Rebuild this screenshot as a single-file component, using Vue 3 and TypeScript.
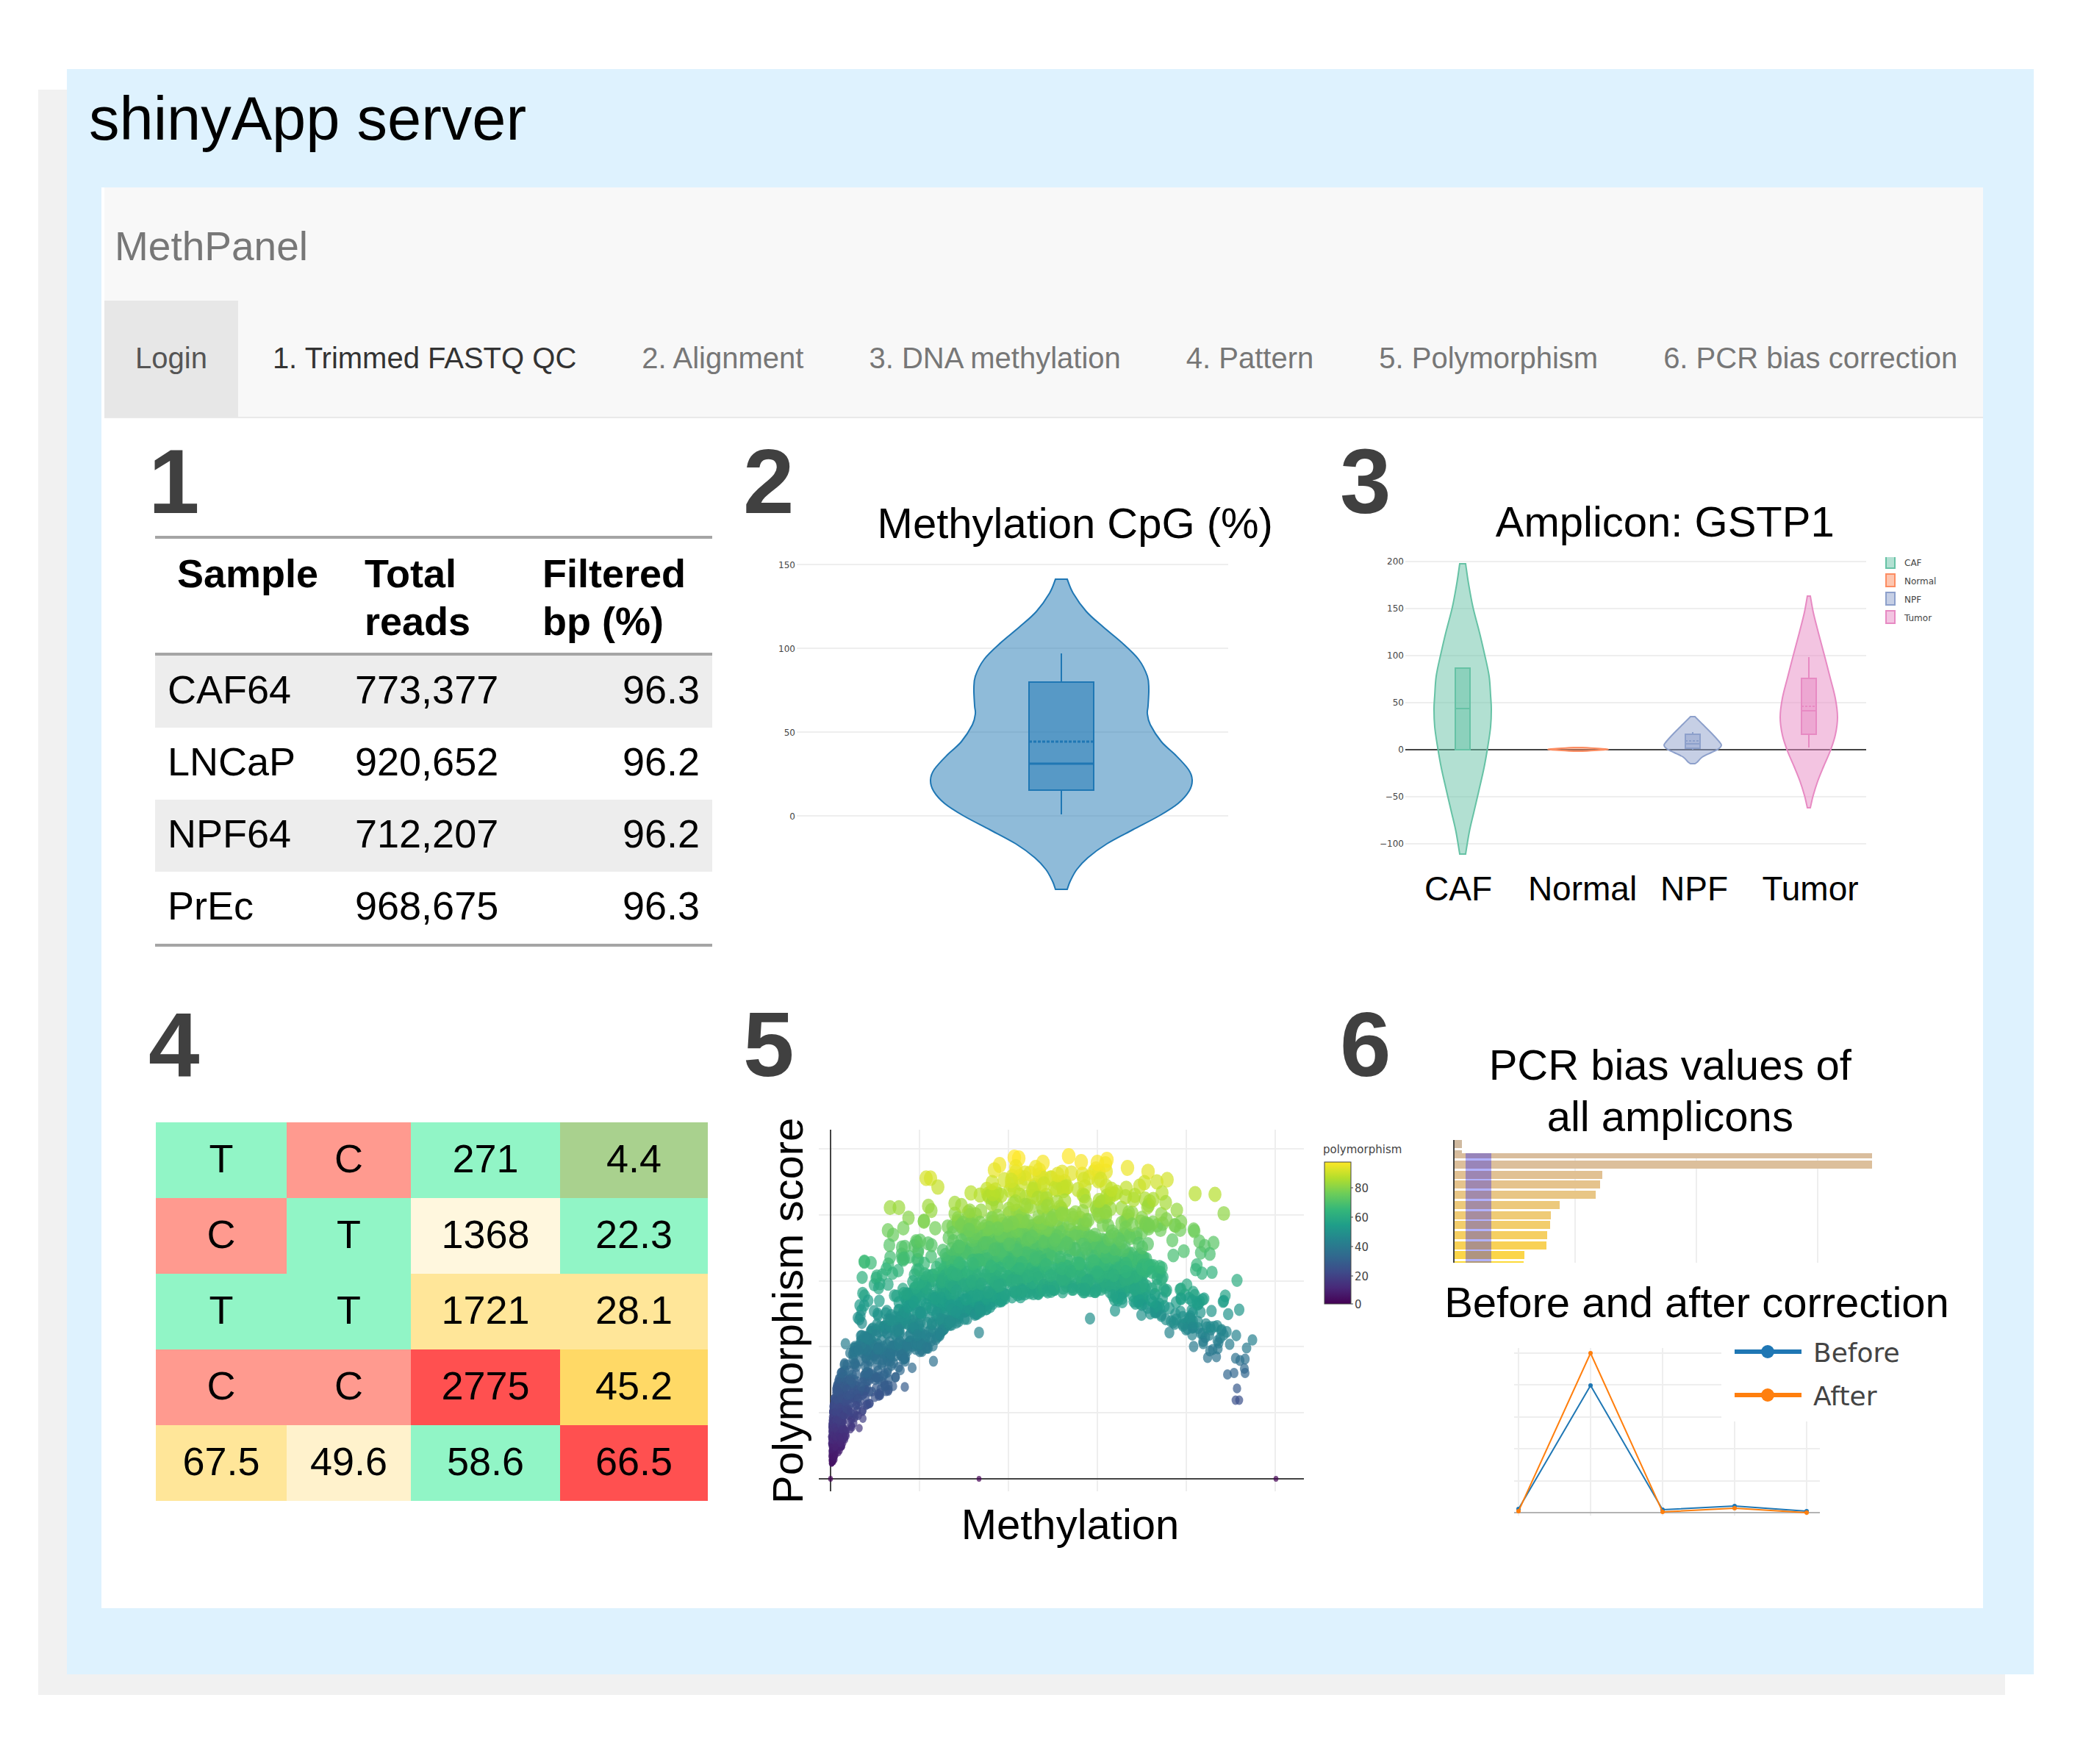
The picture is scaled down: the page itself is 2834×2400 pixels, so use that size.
<script setup lang="ts">
type Point = [number, number]

interface Violin {
  name: string
  color: string
  cx: number
  /** Pairs of half-width and vertical position, from top to bottom. */
  profile: Point[]
  box?: { half: number; top: number; bottom: number; median: number; mean?: number; low?: number; high?: number }
}

const tabs = [
  { label: 'Login', state: 'active' },
  { label: '1. Trimmed FASTQ QC', state: 'hover' },
  { label: '2. Alignment', state: '' },
  { label: '3. DNA methylation', state: '' },
  { label: '4. Pattern', state: '' },
  { label: '5. Polymorphism', state: '' },
  { label: '6. PCR bias correction', state: '' },
]

const samples = [
  { name: 'CAF64', reads: '773,377', filtered: '96.3' },
  { name: 'LNCaP', reads: '920,652', filtered: '96.2' },
  { name: 'NPF64', reads: '712,207', filtered: '96.2' },
  { name: 'PrEc', reads: '968,675', filtered: '96.3' },
]

const pattern: { text: string; tone: string }[][] = [
  [{ text: 'T', tone: 'mint' }, { text: 'C', tone: 'coral' }, { text: '271', tone: 'mint' }, { text: '4.4', tone: 'olive' }],
  [{ text: 'C', tone: 'coral' }, { text: 'T', tone: 'mint' }, { text: '1368', tone: 'ivory' }, { text: '22.3', tone: 'mint' }],
  [{ text: 'T', tone: 'mint' }, { text: 'T', tone: 'mint' }, { text: '1721', tone: 'sand' }, { text: '28.1', tone: 'sand' }],
  [{ text: 'C', tone: 'coral' }, { text: 'C', tone: 'coral' }, { text: '2775', tone: 'red' }, { text: '45.2', tone: 'gold' }],
  [{ text: '67.5', tone: 'sand' }, { text: '49.6', tone: 'cream' }, { text: '58.6', tone: 'mint' }, { text: '66.5', tone: 'red' }],
]

/** Closed outline mirrored around cx, smoothed with Catmull-Rom segments. */
function outline(v: Violin): string {
  const side = (sign: number): Point[] => v.profile.map(([w, y]) => [v.cx + sign * w, y])
  const curve = (p: Point[]): string => {
    let d = ''
    for (let i = 0; i < p.length - 1; i++) {
      const a = p[Math.max(i - 1, 0)]
      const b = p[i]
      const c = p[i + 1]
      const e = p[Math.min(i + 2, p.length - 1)]
      const n = [b[0] + (c[0] - a[0]) / 6, b[1] + (c[1] - a[1]) / 6, c[0] - (e[0] - b[0]) / 6, c[1] - (e[1] - b[1]) / 6, c[0], c[1]]
      d += 'C' + n.map((k) => k.toFixed(1)).join(' ')
    }
    return d
  }
  const right = side(1)
  const left = side(-1).reverse()
  return `M${right[0].join(' ')}${curve(right)}L${left[0].join(' ')}${curve(left)}Z`
}

const cpg: Violin = {
  name: 'CpG',
  color: '#1f77b4',
  cx: 454,
  profile: [
    [8, 41], [16, 60], [34, 85], [57, 106], [82, 127], [105, 150], [117, 173], [119, 190], [118, 213], [117, 224], [121, 239],
    [136, 262], [156, 281], [173, 300], [178, 314], [174, 329], [159, 346], [133, 363], [97, 382], [62, 401], [36, 420],
    [21, 436], [12, 452], [8, 463],
  ],
}
const cpgTicks = [150, 100, 50, 0].map((value, i) => ({ value, y: 21 + i * 114 }))

const amplicon: Violin[] = [
  {
    name: 'CAF',
    color: '#66c2a5',
    cx: 190,
    profile: [
      [4, 20], [8, 47], [14, 79], [23, 114], [30, 144], [36, 173], [38, 199], [39, 218], [38, 242], [34, 270], [29, 298],
      [22, 329], [15, 359], [9, 385], [4, 415],
    ],
    box: { half: 10, top: 162, bottom: 273, median: 217 },
  },
  { name: 'Normal', color: '#fc8d62', cx: 347, profile: [[6, 270], [37, 272], [37, 273], [6, 275]] },
  {
    name: 'NPF',
    color: '#8da0cb',
    cx: 503,
    profile: [[3, 228], [13, 238], [26, 251], [36, 262], [39, 267], [35, 272], [25, 277], [13, 283], [6, 290], [3, 292]],
    box: { half: 10, top: 252, bottom: 271, median: 265, mean: 261, high: 249, low: 273 },
  },
  {
    name: 'Tumor',
    color: '#e78ac3',
    cx: 661,
    profile: [
      [2, 64], [6, 86], [13, 114], [21, 144], [29, 175], [36, 203], [39, 229], [36, 253], [29, 275], [20, 296], [12, 316],
      [6, 335], [2, 352],
    ],
    box: { half: 10, top: 176, bottom: 252, median: 220, mean: 214, high: 147, low: 270 },
  },
]
const ampliconTicks = ['200', '150', '100', '50', '0', '−50', '−100'].map((label, i) => ({ label, y: 17 + i * 64 }))
const ampliconLabels = [
  { name: 'CAF', x: 184 },
  { name: 'Normal', x: 353 },
  { name: 'NPF', x: 505 },
  { name: 'Tumor', x: 663 },
]

/* ---- Polymorphism scatter ---- */
const viridis: [number, number, number][] = [
  [68, 1, 84], [72, 40, 120], [62, 74, 137], [49, 104, 142], [38, 130, 142], [31, 158, 137], [53, 183, 121], [109, 205, 89],
  [180, 222, 44], [253, 231, 37],
]
function scoreColor(score: number): string {
  const t = Math.min(Math.max(score / 97, 0), 1) * (viridis.length - 1)
  const i = Math.min(Math.floor(t), viridis.length - 2)
  return `rgb(${viridis[i].map((c, k) => Math.round(c + (viridis[i + 1][k] - c) * (t - i))).join(',')})`
}
const viridisStops = viridis.map((c, i) => ({ offset: i / (viridis.length - 1), color: `rgb(${c.join(',')})` }))

function at(curve: Point[], x: number): number {
  for (let i = 1; i < curve.length; i++) {
    const [x0, y0] = curve[i - 1]
    const [x1, y1] = curve[i]
    if (x <= x1) return y0 + ((y1 - y0) * (x - x0)) / (x1 - x0)
  }
  return curve[curve.length - 1][1]
}

const floor: Point[] = [
  [141, 494], [147, 484], [160, 460], [187, 414], [217, 396], [243, 352], [283, 329], [300, 305], [330, 293], [377, 268],
  [410, 263], [443, 258], [462, 258], [513, 258], [527, 269], [565, 278], [596, 297], [617, 308], [651, 330], [680, 348],
]
const middle: Point[] = [
  [141, 450], [145, 395], [160, 350], [180, 316], [210, 288], [250, 255], [290, 220], [330, 184], [390, 164], [460, 164],
  [510, 182], [560, 205], [610, 240], [650, 262], [670, 300], [690, 345],
]
const ceiling: Point[] = [
  [141, 440], [153, 340], [167, 300], [183, 240], [210, 220], [240, 194], [270, 175], [310, 150], [360, 112], [393, 92],
  [465, 90], [513, 90], [548, 100], [596, 130], [634, 165], [675, 225],
]

let seed = 20417
function random(): number {
  seed = (seed * 1664525 + 1013904223) % 4294967296
  return seed / 4294967296
}

function cloud(bands: [number, number, number][], low: Point[], high: Point[], skew: number): Point[] {
  const out: Point[] = []
  for (const [from, to, count] of bands) {
    for (let i = 0; i < count; i++) {
      const x = from + (to - from) * random()
      const bottom = at(low, x)
      out.push([x, bottom + (at(high, x) - bottom) * Math.pow(random(), skew)])
    }
  }
  return out
}

const singles: Point[] = [
  [270, 103], [276, 103], [286, 115], [221, 143], [233, 143], [246, 157], [218, 174], [225, 180], [220, 194], [239, 171],
  [237, 197], [240, 212], [273, 141], [277, 147], [267, 161], [267, 162], [186, 216], [195, 218], [186, 217], [183, 238],
  [203, 236], [309, 137], [318, 140], [331, 123], [177, 293], [280, 352], [241, 387], [251, 361], [342, 313], [225, 386],
  [184, 430], [179, 443], [390, 75], [396, 76], [392, 88], [370, 85], [363, 92], [386, 106], [360, 109], [429, 82],
  [419, 89], [464, 73], [481, 81], [449, 98], [254, 195], [262, 188], [503, 82], [516, 78], [514, 84], [544, 89],
  [572, 94], [584, 108], [598, 105], [567, 109], [591, 123], [596, 136], [579, 132], [636, 124], [663, 125], [675, 151],
  [693, 242], [696, 282], [681, 288], [677, 263], [674, 271], [675, 270], [659, 231], [661, 191], [649, 195], [656, 206],
  [634, 173], [635, 175], [608, 167], [597, 159], [493, 294], [527, 283], [563, 289], [575, 287], [601, 313], [634, 332],
  [647, 328], [653, 347], [665, 346], [660, 336], [667, 335], [668, 327], [683, 329], [692, 317], [714, 323], [706, 334],
  [679, 312], [675, 316], [666, 304], [662, 305], [691, 348], [697, 351], [704, 349], [703, 362], [704, 368], [689, 368],
  [680, 370], [693, 389], [691, 405], [696, 405], [632, 316], [656, 338], [140, 512], [342, 512], [746, 512],
]

const dots = [
  ...cloud([[141, 146, 150], [146, 160, 220], [160, 220, 230], [220, 300, 250], [300, 430, 480], [430, 570, 350], [570, 650, 90], [650, 672, 10]], floor, middle, 1.1),
  ...cloud([[160, 220, 22], [220, 300, 36], [300, 430, 110], [430, 570, 115], [570, 650, 26]], middle, ceiling, 1.3),
  ...singles,
].map(([x, y]) => {
  const score = (512 - y) / 4.48
  const r = Math.sqrt(11 + 0.78 * score)
  return { x: x.toFixed(1), y: y.toFixed(1), rx: r.toFixed(1), ry: (r * 1.18).toFixed(1), color: scoreColor(score) }
})
const colorTicks = [80, 60, 40, 20, 0].map((value, i) => ({ value, y: [116, 156, 196, 236, 274][i] }))

/* ---- PCR bias bars ---- */
const bars = [
  { y: -3, h: 11, w: 11, color: '#d0baa0' },
  { y: 11, h: 11, w: 11, color: '#d4bc9f' },
  { y: 15, h: 7, w: 569, color: '#d9bd9d' },
  { y: 25, h: 11, w: 569, color: '#dcbf9b' },
  { y: 39, h: 11, w: 202, color: '#e1c193' },
  { y: 52, h: 11, w: 199, color: '#e5c38d' },
  { y: 66, h: 11, w: 193, color: '#e8c686' },
  { y: 80, h: 11, w: 144, color: '#ecc97c' },
  { y: 94, h: 11, w: 132, color: '#efcb76' },
  { y: 107, h: 11, w: 131, color: '#f2cd6c' },
  { y: 121, h: 11, w: 127, color: '#f5cf62' },
  { y: 135, h: 11, w: 126, color: '#f8d156' },
  { y: 148, h: 11, w: 96, color: '#fbd549' },
  { y: 162, h: 2, w: 95, color: '#fdda38' },
]

/* ---- Before / after lines ---- */
const xs = [266, 364, 462, 560, 658]
const series = [
  { name: 'Before', color: '#1f77b4', ys: [246, 78, 247, 242, 249], legendY: 32 },
  { name: 'After', color: '#ff7f0e', ys: [249, 34, 250, 245, 251], legendY: 91 },
]
const path = (ys: number[]) => ys.map((y, i) => `${xs[i]},${y}`).join(' ')
</script>

<template>
  <main class="server">
    <h1>shinyApp server</h1>
    <div class="app">
      <header class="navbar">
        <div class="brand">MethPanel</div>
        <nav class="tabs">
          <a v-for="tab in tabs" :key="tab.label" href="#" class="tab" :class="tab.state">{{ tab.label }}</a>
        </nav>
      </header>

      <div class="panels">
        <section class="panel">
          <div class="head"><span class="number">1</span></div>
          <table class="samples">
            <colgroup><col class="c-sample" /><col class="c-reads" /><col class="c-filtered" /></colgroup>
            <thead>
              <tr><th scope="col">Sample</th><th scope="col">Total<br />reads</th><th scope="col">Filtered<br />bp (%)</th></tr>
            </thead>
            <tbody>
              <tr v-for="row in samples" :key="row.name">
                <td>{{ row.name }}</td><td>{{ row.reads }}</td><td class="end">{{ row.filtered }}</td>
              </tr>
            </tbody>
          </table>
        </section>

        <section class="panel">
          <div class="head"><span class="number">2</span><h2 class="title cpg-title">Methylation CpG (%)</h2></div>
          <svg class="chart" viewBox="-43 0 812 503" role="img" aria-label="Methylation CpG violin plot">
            <g v-for="t in cpgTicks" :key="t.value">
              <line class="grid" x1="94" x2="681" :y1="t.y" :y2="t.y" />
              <text class="tick" x="92" :y="t.y + 5" text-anchor="end">{{ t.value }}</text>
            </g>
            <g :stroke="cpg.color" :fill="cpg.color" fill-opacity="0.5" stroke-width="2">
              <path :d="outline(cpg)" />
              <rect x="410" y="181" width="88" height="147" />
              <path d="M454 142V181M454 328V361" />
              <path d="M410 292H498" stroke-width="3" />
              <path d="M410 262H498" stroke-width="3" stroke-dasharray="4 2" />
            </g>
          </svg>
        </section>

        <section class="panel">
          <div class="head"><span class="number">3</span><h2 class="title amplicon-title">Amplicon: GSTP1</h2></div>
          <svg class="chart" viewBox="-41 0 939 503" role="img" aria-label="Amplicon GSTP1 violin plots">
            <g v-for="t in ampliconTicks" :key="t.label">
              <line :class="t.label === '0' ? 'zero' : 'grid'" x1="112" x2="739" :y1="t.y" :y2="t.y" />
              <text class="tick" x="110" :y="t.y + 4" text-anchor="end">{{ t.label }}</text>
            </g>
            <g v-for="v in amplicon" :key="v.name" :stroke="v.color" :fill="v.color" fill-opacity="0.5" stroke-width="2">
              <path :d="outline(v)" />
              <template v-if="v.box">
                <rect :x="v.cx - v.box.half" :y="v.box.top" :width="v.box.half * 2" :height="v.box.bottom - v.box.top" />
                <path :d="`M${v.cx - v.box.half} ${v.box.median}h${v.box.half * 2}`" />
                <path v-if="v.box.mean" :d="`M${v.cx - v.box.half} ${v.box.mean}h${v.box.half * 2}`" stroke-dasharray="3 2" />
                <path v-if="v.box.high" :d="`M${v.cx} ${v.box.high}V${v.box.top}M${v.cx} ${v.box.bottom}V${v.box.low}`" />
              </template>
            </g>
            <g v-for="(v, i) in amplicon" :key="v.name">
              <path v-if="i === 0" d="M766 11V26H778V11" :stroke="v.color" :fill="v.color" fill-opacity="0.5" stroke-width="2" />
              <rect v-else x="766" :y="9 + i * 25" width="12" height="17" :stroke="v.color" :fill="v.color" fill-opacity="0.5" stroke-width="2" />
              <text class="tick" x="791" :y="23 + i * 25">{{ v.name }}</text>
            </g>
            <text v-for="l in ampliconLabels" :key="l.name" class="category" :x="l.x" y="478" text-anchor="middle">{{ l.name }}</text>
          </svg>
        </section>

        <section class="panel">
          <div class="head"><span class="number">4</span></div>
          <table class="pattern">
            <colgroup><col class="p-1" /><col class="p-2" /><col class="p-3" /><col class="p-4" /></colgroup>
            <tbody>
              <tr v-for="(row, r) in pattern" :key="r">
                <td v-for="(cell, c) in row" :key="c" :class="cell.tone">{{ cell.text }}</td>
              </tr>
            </tbody>
          </table>
        </section>

        <section class="panel">
          <div class="head"><span class="number">5</span></div>
          <svg class="chart" viewBox="-43 -9 812 639" role="img" aria-label="Polymorphism score against methylation">
            <defs>
              <linearGradient id="viridis" x1="0" y1="1" x2="0" y2="0">
                <stop v-for="s in viridisStops" :key="s.offset" :offset="s.offset" :stop-color="s.color" />
              </linearGradient>
            </defs>
            <line v-for="i in 5" :key="'h' + i" class="grid" x1="124" x2="784" :y1="512 - i * 90 + (i > 2 ? 1 : 0)" :y2="512 - i * 90 + (i > 2 ? 1 : 0)" />
            <line v-for="i in 5" :key="'v' + i" class="grid" :x1="140 + i * 121" :x2="140 + i * 121" y1="37" y2="529" />
            <path class="axis" d="M140 37V529M124 512H784" />
            <ellipse v-for="(d, i) in dots" :key="i" :cx="d.x" :cy="d.y" :rx="d.rx" :ry="d.ry" :fill="d.color" fill-opacity="0.7" />
            <text class="label" transform="translate(102 546) rotate(-90)">Polymorphism score</text>
            <text class="label" x="466" y="594" text-anchor="middle">Methylation</text>
            <text class="bar-text" x="810" y="69">polymorphism</text>
            <rect x="812" y="81" width="36" height="193" fill="url(#viridis)" stroke="#444" stroke-width="1" />
            <g v-for="t in colorTicks" :key="t.value">
              <line x1="848" x2="851" :y1="t.y" :y2="t.y" stroke="#444" />
              <text class="bar-text" x="853" :y="t.y + 6">{{ t.value }}</text>
            </g>
          </svg>
        </section>

        <section class="panel">
          <div class="head"><span class="number">6</span><h2 class="title bias-title">PCR bias values of<br />all amplicons</h2></div>
          <svg class="chart" viewBox="-41 0 939 168" role="img" aria-label="PCR bias values">
            <path class="grid" d="M343 20V164M508 20V164M673 20V164" />
            <rect v-for="b in bars" :key="b.y" x="178" :y="b.y" :width="b.w" :height="b.h" :fill="b.color" />
            <rect x="194" y="15" width="35" height="149" fill="#0000ff" fill-opacity="0.3" />
            <path class="axis" d="M178 -3V164" />
          </svg>
          <h2 class="title correction-title">Before and after correction</h2>
          <svg class="chart" viewBox="-41 0 939 263" role="img" aria-label="Before and after correction">
            <path class="grid" d="M266 27V255M364 27V255M462 27V255M560 127V255M658 127V255" />
            <path class="grid" d="M260 34H542M260 77H542M260 121H542M260 164H676M260 208H676" />
            <path d="M260 251H676" stroke="#b4b4b4" stroke-width="2" />
            <g v-for="s in series" :key="s.name">
              <polyline :points="path(s.ys)" fill="none" :stroke="s.color" stroke-width="2" />
              <circle v-for="(y, i) in s.ys" :key="i" :cx="xs[i]" :cy="y" r="3" :fill="s.color" />
              <line x1="560" x2="651" :y1="s.legendY" :y2="s.legendY" :stroke="s.color" stroke-width="6" />
              <circle cx="605" :cy="s.legendY" r="9" :fill="s.color" />
              <text class="legend" x="667" :y="s.legendY + 14">{{ s.name }}</text>
            </g>
          </svg>
        </section>
      </div>
    </div>
  </main>
</template>

<style>
body {
  margin: 0;
  background: #fff;
}
</style>

<style scoped>
.server {
  margin: 94px 67px 122px 91px;
  padding-bottom: 90px;
  display: flow-root;
  background: #def2fe;
  box-shadow: -39px 28px 0 #f1f1f1;
  font-family: 'Liberation Sans', Arial, sans-serif;
  color: #000;
}

h1 {
  margin: 0;
  padding: 20px 30px 45px;
  font-size: 83px;
  line-height: 96px;
  font-weight: 400;
}

.app {
  margin: 0 69px 0 47px;
  background: #fff;
}

.navbar {
  margin-left: 4px;
  background: #f8f8f8;
  border-bottom: 2px solid #e9e9e9;
}

.brand {
  padding: 49px 14px 43px;
  font-size: 55px;
  line-height: 62px;
  color: #777;
}

.tabs {
  display: flex;
  gap: 5px;
}

.tab {
  padding: 0 42px 2px;
  font-size: 40px;
  line-height: 156px;
  white-space: nowrap;
  color: #777;
  text-decoration: none;
}

.tab.active {
  background: #e7e7e7;
  color: #555;
}

.tab.hover {
  color: #333;
}

.panels {
  display: grid;
  grid-template-columns: 809fr 812fr 939fr;
  row-gap: 63px;
  padding: 16px 0 58px;
}

.panel {
  min-width: 0;
}

.head {
  display: flex;
  align-items: flex-start;
  padding-left: 64px;
}

.number {
  font-size: 125px;
  line-height: 140px;
  font-weight: 700;
  color: #404040;
}

.title {
  margin: 0;
  font-size: 58px;
  line-height: 70px;
  font-weight: 400;
  text-align: center;
}

.head .title {
  flex: 1;
}

.cpg-title {
  padding: 92px 0 0 86px;
}

.amplicon-title {
  padding: 90px 60px 2px 0;
}

.bias-title {
  padding: 63px 46px 0 0;
}

.correction-title {
  padding: 15px 0 0 160px;
}

.chart {
  display: block;
  width: 100%;
  height: auto;
  overflow: visible;
}

table {
  border-collapse: collapse;
  table-layout: fixed;
  font-size: 54px;
  line-height: 65px;
}

.samples {
  width: 758px;
  margin: 4px 0 0 73px;
  border-top: 4px solid #a5a5a5;
  border-bottom: 4px solid #a5a5a5;
}

.c-sample {
  width: 255px;
}

.c-reads {
  width: 242px;
}

.c-filtered {
  width: 261px;
}

.samples th {
  padding: 15px 0 10px 30px;
  text-align: left;
  vertical-align: top;
  white-space: nowrap;
}

.samples thead {
  border-bottom: 4px solid #a5a5a5;
}

.samples td {
  padding: 14px 17px 19px;
}

.samples tbody tr:nth-child(odd) {
  background: #ededed;
}

.samples .end {
  text-align: right;
}

.pattern {
  width: 751px;
  margin: 36px 0 0 74px;
}

.p-1 {
  width: 178px;
}

.p-2 {
  width: 169px;
}

.p-3 {
  width: 203px;
}

.p-4 {
  width: 201px;
}

.pattern td {
  padding: 17px 0 21px;
  text-align: center;
}

.mint {
  background: #91f5c6;
}

.coral {
  background: #ff9a8f;
}

.olive {
  background: #a9d18e;
}

.ivory {
  background: #fff7de;
}

.sand {
  background: #ffe699;
}

.gold {
  background: #ffd966;
}

.cream {
  background: #fff2cc;
}

.red {
  background: #ff5050;
}

.grid {
  stroke: #eee;
  stroke-width: 2;
}

.zero,
.axis {
  stroke: #444;
  stroke-width: 2;
}

.tick,
.bar-text,
.legend {
  font-family: 'DejaVu Sans', Verdana, sans-serif;
  fill: #444;
}

.tick {
  font-size: 12px;
}

.bar-text {
  font-size: 15px;
}

.legend {
  font-size: 36px;
}

.category {
  font-size: 46px;
}

.label {
  font-size: 58px;
}
</style>
